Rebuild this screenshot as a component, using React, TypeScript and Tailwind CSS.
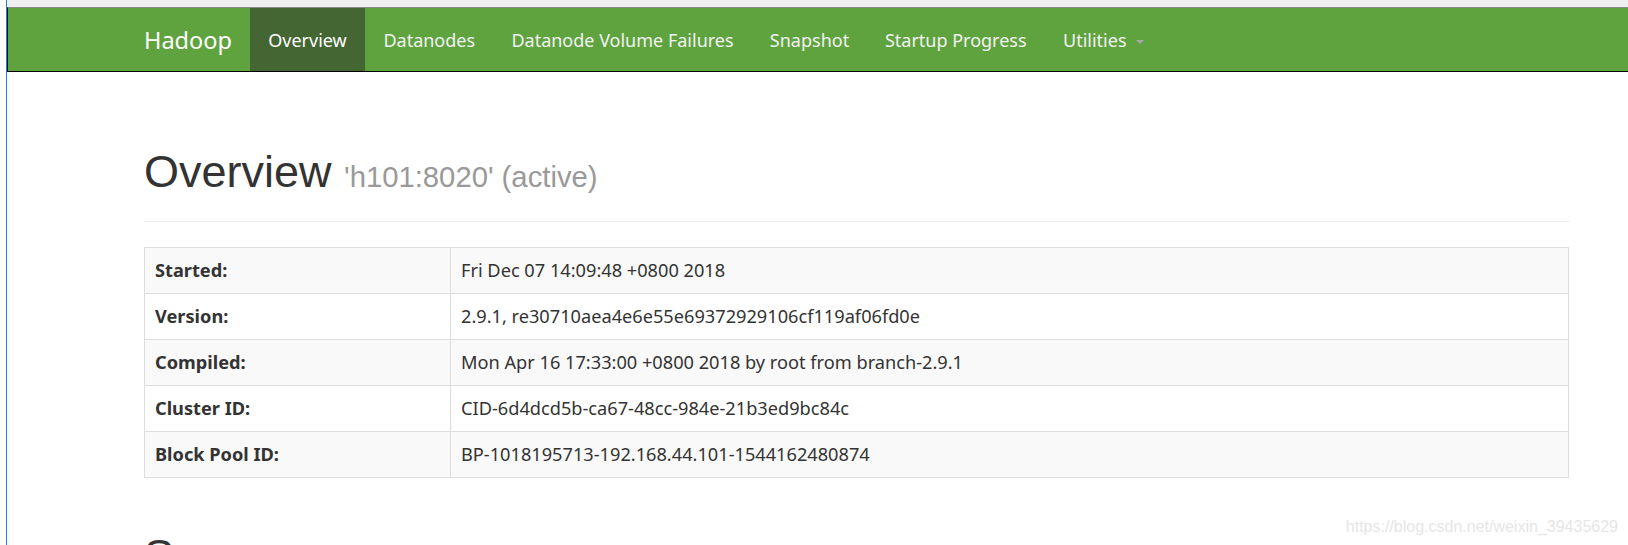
import React from "react";

const rows: [string, string][] = [
  ["Started:", "Fri Dec 07 14:09:48 +0800 2018"],
  ["Version:", "2.9.1, re30710aea4e6e55e69372929106cf119af06fd0e"],
  ["Compiled:", "Mon Apr 16 17:33:00 +0800 2018 by root from branch-2.9.1"],
  ["Cluster ID:", "CID-6d4dcd5b-ca67-48cc-984e-21b3ed9bc84c"],
  ["Block Pool ID:", "BP-1018195713-192.168.44.101-1544162480874"],
];

export default function App() {
  return (
    <div className="relative flex h-[545px] w-full overflow-hidden bg-white text-[#333]">
      <div className="w-[6px] shrink-0" />
      <div className="w-px shrink-0 bg-[#1a84d8]" />
      <div className="flex min-w-0 flex-1 flex-col">
        <div className="h-[7px] shrink-0 bg-[#f0f0f0]" />
        <nav className="flex h-[65px] shrink-0 items-stretch border-t border-l border-b border-t-[#8a8a8a] border-l-black border-b-black bg-[#5fa33e] pl-[136px] font-['Noto_Sans',sans-serif] text-[18px] text-[#f2f2f2]">
          <div className="flex w-[106px] items-center pt-[2px] text-[23.5px] text-white">Hadoop</div>
          <div className="flex w-[115px] items-center justify-center bg-[#446633] pt-[2px] text-white">Overview</div>
          <div className="flex w-[128.5px] items-center justify-center pt-[2px]">Datanodes</div>
          <div className="flex w-[258px] items-center justify-center pt-[2px]">Datanode Volume Failures</div>
          <div className="flex w-[116px] items-center justify-center pt-[2px]">Snapshot</div>
          <div className="flex w-[176.5px] items-center justify-center pt-[2px]">Startup Progress</div>
          <div className="flex items-center pl-[19px] pt-[2px]">
            <span>Utilities</span>
            <span className="ml-[9px] mt-[2px] inline-block h-0 w-0 border-x-[4.5px] border-t-[4.5px] border-x-transparent border-t-[#a8a8a8]" />
          </div>
        </nav>
        <div className="pl-[137px]">
          <div className="mt-[75px] w-[1425px] border-b border-[#eee] pb-[18px]">
            <h1 className="font-['Liberation_Sans',Arial,sans-serif] text-[45px] leading-[49.5px] text-[#333]">
              Overview{" "}
              <span className="text-[29.25px] text-[#999]">'h101:8020' (active)</span>
            </h1>
          </div>
          <table className="mt-[25.5px] w-[1425px] border-collapse border border-[#ddd] font-['Noto_Sans',sans-serif] text-[18.2px]">
            <tbody>
              {rows.map(([k, v], i) => (
                <tr key={k} className={i % 2 === 0 ? "bg-[#f9f9f9]" : "bg-white"}>
                  <th className="w-[306px] border border-[#ddd] px-[10px] py-[10px] text-left font-bold leading-[25px]">{k}</th>
                  <td className="border border-[#ddd] px-[10px] py-[10px] leading-[25px]">{v}</td>
                </tr>
              ))}
            </tbody>
          </table>
          <h1 className="mt-[53px] font-['Liberation_Sans',Arial,sans-serif] text-[45px] leading-[49.5px] text-[#333]">Summary</h1>
        </div>
      </div>
      <div className="absolute right-[10px] top-[518.5px] font-['Liberation_Sans',Arial,sans-serif] text-[16px] leading-[16px] text-[#e6e6e6]">
        https://blog.csdn.net/weixin_39435629
      </div>
    </div>
  );
}
